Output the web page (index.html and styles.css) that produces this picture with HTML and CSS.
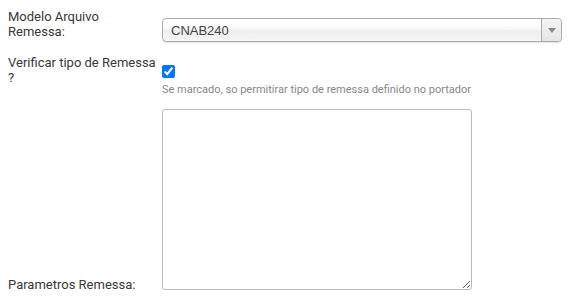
FILE: index.html
```html
<!DOCTYPE html>
<html>
    <head>
        <title>Remessa</title>
        <meta charset="UTF-8">
        <link rel="stylesheet" href="styles.css">
    </head>
    <body>
        <form class="cfg">
            <label class="lbl lbl-top">Modelo Arquivo<br>Remessa:</label>
            <div class="fld fld-select">
                <div class="chosen">
                    <span class="chosen-text">CNAB240</span>
                    <span class="chosen-arrow"><b></b></span>
                </div>
            </div>

            <label class="lbl lbl-top" for="verif">Verificar tipo de Remessa<br>?</label>
            <div class="fld fld-check">
                <input type="checkbox" id="verif" class="chk" checked>
                <span class="help">Se marcado, so permitirar tipo de remessa definido no portador</span>
            </div>

            <label class="lbl lbl-bottom" for="params">Parametros Remessa:</label>
            <div class="fld">
                <textarea id="params" class="area"></textarea>
            </div>
        </form>
    </body>
</html>
```

FILE: styles.css
```css
body {
    margin: 8px;
    font-family: Roboto, "Liberation Sans", sans-serif;
    font-size: 13px;
    color: #383838;
    background: #fff;
}
.cfg {
    display: grid;
    grid-template-columns: 154px 400px;
    row-gap: 12px;
}
.lbl {
    line-height: 15px;
}
.lbl-top {
    align-self: start;
    padding-top: 1px;
}
.lbl-bottom {
    align-self: end;
    margin-bottom: -2px;
}

/* chosen style select */
.fld-select {
    padding-top: 10px;
}
.chosen {
    position: relative;
    height: 22px;
    border: 1px solid #aaa;
    border-radius: 4px;
    background: linear-gradient(#fff 20%, #f6f6f6 50%, #eee 52%, #f4f4f4 100%);
    box-shadow: 0 0 3px #fff inset, 0 1px 1px rgba(0, 0, 0, 0.1);
    font-family: "Liberation Sans", Arial, sans-serif;
    color: #444;
}
.chosen-text {
    display: block;
    padding-left: 8px;
    line-height: 23px;
}
.chosen-arrow {
    position: absolute;
    top: 0;
    right: 0;
    width: 19px;
    height: 22px;
    border-left: 1px solid #aaa;
    border-radius: 0 4px 4px 0;
    background: linear-gradient(#f4f4f4 0%, #e6e6e6 100%);
}
.chosen-arrow b {
    position: absolute;
    left: 6px;
    top: 9px;
    border-left: 4px solid transparent;
    border-right: 4px solid transparent;
    border-top: 5px solid #888;
}

.fld-check {
    padding-top: 11px;
}
.chk {
    display: block;
    margin: 0 0 5px 0;
    width: 13px;
    height: 13px;
}
.help {
    display: block;
    font-size: 11px;
    color: #888;
    line-height: 14px;
}

.area {
    display: block;
    margin: 0;
    width: 310px;
    height: 181px;
    box-sizing: border-box;
    border: 1px solid #bbb;
    border-radius: 3px;
    resize: both;
}
```
